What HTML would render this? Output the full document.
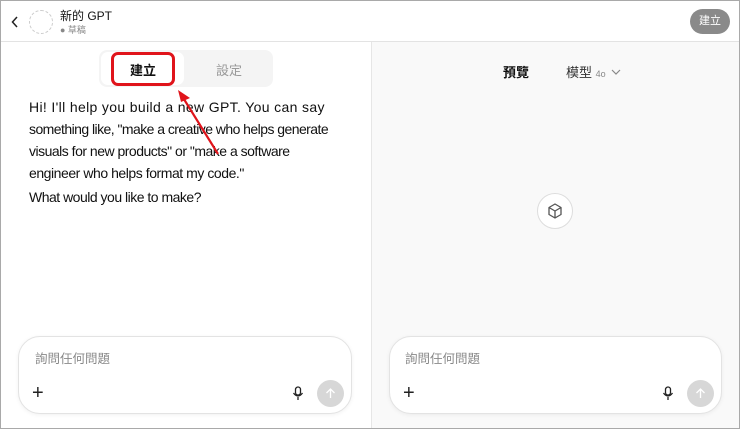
<!DOCTYPE html>
<html><head><meta charset="utf-8"><style>
*{margin:0;padding:0;box-sizing:border-box}
body{width:740px;height:429px;overflow:hidden;background:#fff;font-family:"Liberation Sans","Noto Sans CJK TC",sans-serif;position:relative}
.frame{position:absolute;left:0;top:0;width:740px;height:429px;border:1px solid #a9a9a9}
.hdr{position:absolute;left:1px;top:1px;width:738px;height:41px;border-bottom:1px solid #e3e3e3;background:#fff}
.right{position:absolute;left:371px;top:42px;width:368px;height:386px;background:#f9f9f9;border-left:1px solid #e6e6e6}
.abs{position:absolute}
.box{position:absolute;background:#fff;border:1px solid #e3e3e3;border-radius:22px;box-shadow:0 1px 4px rgba(0,0,0,.06)}
.t{white-space:nowrap}
.t span{display:block}
</style></head><body>
<div class="hdr"></div>
<div class="right"></div>
<svg class="abs" style="left:10px;top:15px" width="10" height="14"><path d="M7 2 L2.5 7 L7 12" stroke="#222" stroke-width="1.5" fill="none"/></svg>
<div class="abs" style="left:29px;top:10px;width:24px;height:24px;border:1.2px dashed #ccc;border-radius:50%"></div>
<div class="abs" style="left:60px;top:7px;font-size:12px;color:#111">新的 GPT</div>
<div class="abs" style="left:60px;top:23px;font-size:9px;color:#888">● 草稿</div>
<div class="abs" style="left:690px;top:9px;width:40px;height:25px;border-radius:13px;background:#8a8a8a;color:#fff;font-size:11px;line-height:25px;text-align:center">建立</div>
<div class="abs" style="left:99px;top:50px;width:174px;height:37px;background:#f4f4f4;border-radius:8px"></div>
<div class="abs" style="left:101px;top:52px;width:83px;height:33px;background:#fff;border-radius:7px"></div>
<div class="abs" style="left:111px;top:52px;width:64px;height:34px;border:3px solid #e0141b;border-radius:7px"></div>
<div class="abs" style="left:130px;top:60px;font-size:13px;font-weight:bold;color:#111">建立</div>
<div class="abs" style="left:216px;top:60px;font-size:13px;color:#999">設定</div>
<div class="abs t" style="left:29px;top:96px;font-size:14px;line-height:22px;color:#111"><span style="letter-spacing:0.35px">Hi! I'll help you build a new GPT. You can say</span><span style="letter-spacing:-0.55px">something like, "make a creative who helps generate</span><span style="letter-spacing:-0.5px">visuals for new products" or "make a software</span><span style="letter-spacing:-0.45px">engineer who helps format my code."</span></div>
<div class="abs t" style="left:29px;top:189px;font-size:14px;color:#111;letter-spacing:-0.5px">What would you like to make?</div>
<svg class="abs" style="left:170px;top:82px" width="60" height="80"><line x1="48" y1="72" x2="12" y2="14" stroke="#e0141b" stroke-width="2.2"/><path d="M8 8 L20 16 L11 20 Z" fill="#e0141b"/></svg>
<div class="abs" style="left:503px;top:62px;font-size:13px;font-weight:bold;color:#111">預覽</div>
<div class="abs" style="left:566px;top:62px;font-size:13px;color:#333">模型 <span style="font-size:9px;color:#888">4o</span></div>
<svg class="abs" style="left:611px;top:68px" width="10" height="8"><path d="M1 2 L5 6 L9 2" stroke="#888" stroke-width="1.2" fill="none"/></svg>
<div class="abs" style="left:537px;top:193px;width:36px;height:36px;border:1px solid #ddd;border-radius:50%;background:#fff"></div>
<svg class="abs" style="left:545px;top:201px" width="20" height="20" viewBox="0 0 20 20"><path d="M10 3 L16 6.5 V13.5 L10 17 L4 13.5 V6.5 Z M4 6.5 L10 10 L16 6.5 M10 10 V17" stroke="#555" stroke-width="1.3" fill="none" stroke-linejoin="round"/></svg>
<div class="box" style="left:18px;top:336px;width:334px;height:78px"></div>
<div class="abs" style="left:35px;top:348px;font-size:12.5px;color:#888">詢問任何問題</div>
<div class="abs" style="left:32px;top:382px;font-size:20px;color:#222">+</div>
<svg class="abs" style="left:292px;top:386px" width="12" height="16"><rect x="3.5" y="1" width="5" height="8" rx="2.5" stroke="#222" stroke-width="1.3" fill="none"/><path d="M1.5 7 Q6 13 10.5 7 M6 11 V14" stroke="#222" stroke-width="1.3" fill="none"/></svg>
<div class="abs" style="left:317px;top:380px;width:27px;height:27px;border-radius:50%;background:#d7d7d7"></div>
<svg class="abs" style="left:324px;top:387px" width="13" height="13"><path d="M6.5 11 V2 M2.5 6 L6.5 2 L10.5 6" stroke="#fff" stroke-width="1.3" fill="none"/></svg>
<div class="box" style="left:389px;top:336px;width:333px;height:78px"></div>
<div class="abs" style="left:405px;top:348px;font-size:12.5px;color:#888">詢問任何問題</div>
<div class="abs" style="left:403px;top:382px;font-size:20px;color:#222">+</div>
<svg class="abs" style="left:662px;top:386px" width="12" height="16"><rect x="3.5" y="1" width="5" height="8" rx="2.5" stroke="#222" stroke-width="1.3" fill="none"/><path d="M1.5 7 Q6 13 10.5 7 M6 11 V14" stroke="#222" stroke-width="1.3" fill="none"/></svg>
<div class="abs" style="left:687px;top:380px;width:27px;height:27px;border-radius:50%;background:#d7d7d7"></div>
<svg class="abs" style="left:694px;top:387px" width="13" height="13"><path d="M6.5 11 V2 M2.5 6 L6.5 2 L10.5 6" stroke="#fff" stroke-width="1.3" fill="none"/></svg>
<div class="frame"></div>
</body></html>
